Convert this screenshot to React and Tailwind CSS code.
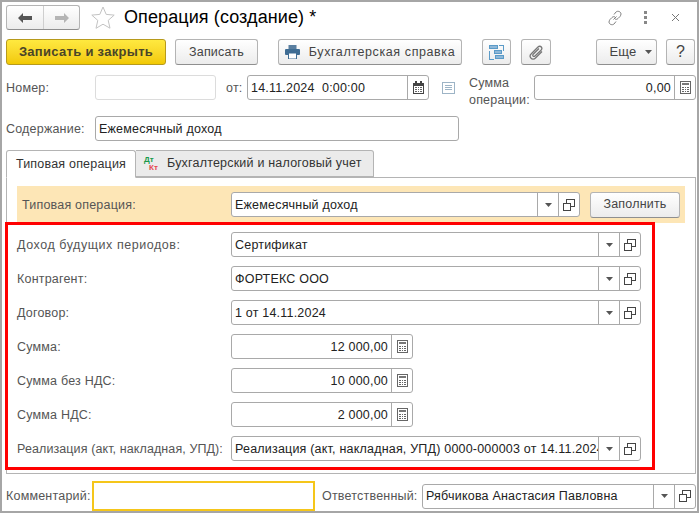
import React from "react";

const Drop = () => (
  <svg width="7" height="4" viewBox="0 0 7 4"><path d="M0 0h7L3.5 4z" fill="#555" /></svg>
);
const Open = () => (
  <svg width="12" height="12" viewBox="0 0 12 12" fill="none" stroke="#444" strokeWidth="1" shapeRendering="crispEdges">
    <path d="M3.500 4V.5h8v7H8" />
    <path d="M.5 4.500h7v7h-7z" fill="#fff" />
    <path d="M4.500 4.500h3v3" />
  </svg>
);
const Calc = () => (
  <svg width="11" height="13" viewBox="0 0 11 13" shapeRendering="crispEdges">
    <rect x="0.5" y="0.5" width="10" height="12" fill="#fff" stroke="#666" />
    <rect x="2" y="2" width="7" height="2" fill="#777" />
    {[5.5, 7.5, 9.5].map((y) => [2, 4.5, 7].map((x) => <rect key={x + "-" + y} x={x} y={y} width="1.5" height="1.5" fill="#666" />))}
  </svg>
);
const Cal = () => (
  <svg width="11" height="13" viewBox="0 0 11 13" shapeRendering="crispEdges">
    <rect x="0" y="2" width="11" height="11" fill="#444" />
    <rect x="2" y="0" width="2" height="3" fill="#444" />
    <rect x="7" y="0" width="2" height="3" fill="#444" />
    <rect x="1" y="5" width="9" height="7" fill="#fff" />
    {[6, 8, 10].map((y) => [2, 4.5, 7].map((x) => <rect key={x + "-" + y} x={x} y={y} width="1.5" height="1" fill="#666" />))}
  </svg>
);

function Side({ w, children }) {
  return <div className={`${w} h-full flex items-center justify-center border-l border-[#a9a9a9] shrink-0`}>{children}</div>;
}

function Field({ w, text, right, drop, open, calc, cal }) {
  return (
    <div className={`${w} h-[25px] flex items-center bg-white border border-[#a9a9a9] rounded-[3px] shrink-0 overflow-hidden`}>
      <div className={`flex-1 min-w-0 px-[3px] pt-px whitespace-pre overflow-hidden text-[#222] ${right ? "text-right" : ""}`}>{text}</div>
      {drop && <Side w="w-[21px]"><Drop /></Side>}
      {open && <Side w="w-[21px]"><Open /></Side>}
      {calc && <Side w="w-[21px]"><Calc /></Side>}
      {cal && <Side w="w-[21px]"><Cal /></Side>}
    </div>
  );
}

function Btn({ w, children, className = "" }) {
  return (
    <button className={`${w} h-[26px] shrink-0 flex items-center justify-center rounded-[3px] border border-[#b4b4b4] border-b-[#8f8f8f] bg-gradient-to-b from-white to-[#ececec] text-[#444] ${className}`}>
      {children}
    </button>
  );
}

function Row({ label, children, mt = "mt-[9px]", labelClass = "" }) {
  return (
    <div className={`flex items-center h-[25px] ${mt}`}>
      <div className={`w-[214px] pt-px text-[#555] shrink-0 whitespace-nowrap ${labelClass}`}>{label}</div>
      {children}
    </div>
  );
}

export default function App() {
  return (
    <div
      className="relative w-[699px] h-[513px] bg-white border-2 border-[#a6a6a6] overflow-hidden text-[12.5px] tracking-[0.2px]"
      style={{ fontFamily: '"Liberation Sans", Arial, sans-serif' }}
    >
      {/* header */}
      <div className="flex items-center h-[25px] mt-[3px] pl-[4px] pr-[17px]">
        <div className="flex w-[74px] h-[25px] rounded-[3px] border border-[#b4b4b4] border-b-[#8f8f8f] bg-gradient-to-b from-white to-[#ececec]">
          <div className="w-[37px] flex items-center justify-center border-r border-[#cfcfcf]">
            <svg width="14" height="10" viewBox="0 0 14 10"><path d="M0 5l5-5v3h9v4H5v3z" fill="#555" /></svg>
          </div>
          <div className="flex-1 flex items-center justify-center">
            <svg width="14" height="10" viewBox="0 0 14 10"><path d="M14 5L9 0v3H0v4h9v3z" fill="#b5b5b5" /></svg>
          </div>
        </div>
        <svg className="ml-[11px]" width="24" height="23" viewBox="0 0 24 23" fill="none" stroke="#c3c3c3" strokeWidth="1">
          <path d="M12 1l3.200 7.400 8 .7-6 5.300 1.800 7.800L12 18.200 5 22.300l1.800-7.900-6-5.300 8-.7z" />
        </svg>
        <div className="ml-[9px] text-[18px] text-black tracking-[0.1px] whitespace-nowrap">Операция (создание) *</div>
        <div className="ml-auto flex items-center">
          <svg width="16" height="16" viewBox="0 0 16 16" fill="none" stroke="#808080" strokeWidth="1">
            <path d="M6.500 9.500l3-3M7 4.500l2-2.500c1.500-1.500 5-.5 5 2 0 1-.5 1.500-1 2.500l-2 2c-1 1-2 1-3 .5M9 11.500l-2 2.500c-1.500 1.500-5 .5-5-2 0-1 .5-1.500 1-2.500l2-2c1-1 2-1 3-.5" />
          </svg>
          <div className="ml-[21px] flex flex-col gap-[2px]">
            <span className="block w-[3px] h-[3px] bg-[#888]" />
            <span className="block w-[3px] h-[3px] bg-[#888]" />
            <span className="block w-[3px] h-[3px] bg-[#888]" />
          </div>
          <svg className="ml-[24px]" width="9" height="9" viewBox="0 0 9 9" stroke="#777" strokeWidth="1"><path d="M1 1l7 7M8 1L1 8" /></svg>
        </div>
      </div>

      {/* toolbar */}
      <div className="flex items-center mt-[9px] pl-[4px]">
        <button className="w-[160px] h-[26px] shrink-0 rounded-[3px] border border-[#b79a1c] bg-gradient-to-b from-[#ffe93f] to-[#f2c900] font-bold text-[13px] tracking-[0.3px] text-[#4a4528]">
          Записать и закрыть
        </button>
        <Btn w="w-[83px]" className="ml-[9px]">Записать</Btn>
        <Btn w="w-[184px]" className="ml-[20px] gap-[9px]">
          <svg width="15" height="14" viewBox="0 0 15 14">
            <rect x="3.500" y="0" width="8" height="4" fill="#5a7fa0" />
            <rect x="0" y="4" width="15" height="6" rx="1" fill="#3f6d94" />
            <rect x="3.500" y="8" width="8" height="6" fill="#fff" stroke="#3f6d94" />
          </svg>
          <span className="tracking-[0.6px]">Бухгалтерская справка</span>
        </Btn>
        <Btn w="w-[29px]" className="ml-[20px]">
          <svg width="15" height="15" viewBox="0 0 15 15" fill="none" stroke="#5b9bc8" strokeWidth="1" shapeRendering="crispEdges">
            <rect x="0.500" y="0.500" width="8" height="3" fill="#8fb8d8" />
            <rect x="5.500" y="5.500" width="7" height="3" fill="#8fb8d8" />
            <rect x="6.500" y="10.500" width="8" height="3" fill="#8fb8d8" />
            <path d="M.5 6v8h4M10 .5h4.500v5" />
          </svg>
        </Btn>
        <Btn w="w-[30px]" className="ml-[10px]">
          <svg width="15" height="15" viewBox="0 0 15 15" fill="none" stroke="#777" strokeWidth="1.300">
            <path d="M13 6.500l-6.500 6.500c-1.500 1.500-4 1.500-5-.5-.7-1.200-.3-2.800.8-3.800L9 2c1-1 2.500-1 3.300 0 .8 1 .7 2.200-.3 3.200L6 11c-.6.600-1.400.600-1.900.100-.5-.5-.5-1.300.1-1.900L10 3.500" />
          </svg>
        </Btn>
        <Btn w="w-[61px]" className="ml-[45px] gap-[8px] pl-[8px]">
          <span className="text-[13px]">Еще</span>
          <Drop />
        </Btn>
        <Btn w="w-[29px]" className="ml-[9px] text-[16px] text-[#333]">?</Btn>
      </div>

      {/* number row */}
      <div className="flex items-start h-[25px] mt-[10px] pl-[4px]">
        <div className="w-[89px] h-[25px] pt-px flex items-center text-[#555] shrink-0">Номер:</div>
        <div className="w-[121px] h-[25px] rounded-[3px] border border-[#dcdcdc] shrink-0" />
        <div className="ml-[10px] w-[21px] h-[25px] pt-px flex items-center text-[#555] shrink-0">от:</div>
        <Field w="w-[182px]" text="14.11.2024  0:00:00" cal />
        <svg className="ml-[13px] mt-[7px] shrink-0" width="13" height="12" viewBox="0 0 13 12" fill="none" stroke="#9db4c6" strokeWidth="1" shapeRendering="crispEdges">
          <rect x="0.500" y="0.500" width="12" height="11" />
          <path d="M3 3.500h7M3 5.500h7M3 7.500h7" />
        </svg>
        <div className="ml-[14px] w-[65px] text-[#555] leading-[17px] shrink-0">Сумма<br />операции:</div>
        <Field w="w-[162px]" text="0,00" right calc />
      </div>

      {/* content */}
      <div className="flex items-center mt-[16px] pl-[4px]">
        <div className="w-[89px] pt-px text-[#555] shrink-0">Содержание:</div>
        <Field w="w-[364px]" text="Ежемесячный доход" />
      </div>

      {/* tabs */}
      <div className="flex items-end mt-[9px] ml-[4px] h-[27px] relative z-10">
        <div className="w-[130px] h-[28px] -mb-px flex items-center justify-center bg-white border border-[#b4b4b4] border-b-white rounded-t-[3px] text-[#333]">
          Типовая операция
        </div>
        <div className="w-[238px] h-[27px] flex items-center pl-[8px] bg-[#ebebeb] border border-l-0 border-[#b4b4b4] rounded-tr-[3px] text-[#333]">
          <span className="relative w-[18px] h-[18px] mr-[5px] shrink-0 text-[8px] font-bold leading-none tracking-normal">
            <span className="absolute left-0 top-[1px] text-[#1a9a4a]">Дт</span>
            <span className="absolute left-[5px] top-[9px] text-[#e5484d]">Кт</span>
          </span>
          <span className="whitespace-nowrap">Бухгалтерский и налоговый учет</span>
        </div>
      </div>

      {/* panel */}
      <div className="ml-[4px] w-[690px] h-[297px] border border-[#b4b4b4] px-[10px] pt-[8px]">
        <div className="flex items-center h-[37px] w-[668px] bg-[#fde6b6] pl-[5px]">
          <div className="w-[209px] pt-px text-[#555] shrink-0">Типовая операция:</div>
          <Field w="w-[349px]" text="Ежемесячный доход" drop open />
          <Btn w="w-[90px]" className="ml-[10px]">Заполнить</Btn>
        </div>
        <div className="mt-[9px]">
          <Row label="Доход будущих периодов:" mt="mt-0" labelClass="tracking-[0.55px]"><Field w="w-[410px]" text="Сертификат" drop open /></Row>
          <Row label="Контрагент:"><Field w="w-[410px]" text="ФОРТЕКС ООО" drop open /></Row>
          <Row label="Договор:"><Field w="w-[410px]" text="1 от 14.11.2024" drop open /></Row>
          <Row label="Сумма:"><Field w="w-[182px]" text="12 000,00" right calc /></Row>
          <Row label="Сумма без НДС:"><Field w="w-[182px]" text="10 000,00" right calc /></Row>
          <Row label="Сумма НДС:"><Field w="w-[182px]" text="2 000,00" right calc /></Row>
          <Row label="Реализация (акт, накладная, УПД):" labelClass="tracking-[0.1px]"><Field w="w-[410px]" text="Реализация (акт, накладная, УПД) 0000-000003 от 14.11.2024" drop open /></Row>
        </div>
      </div>

      {/* footer */}
      <div className="flex items-center mt-[7px] pl-[4px]">
        <div className="w-[86px] pt-px text-[#555] shrink-0 whitespace-nowrap">Комментарий:</div>
        <div className="w-[223px] h-[30px] border-2 border-[#f5c61a] shrink-0" />
        <div className="ml-[7px] w-[100px] pt-px text-[#555] shrink-0 whitespace-nowrap">Ответственный:</div>
        <Field w="w-[274px]" text="Рябчикова Анастасия Павловна" drop open />
      </div>

      {/* red annotation */}
      <div className="absolute left-[3px] top-[220px] w-[650px] h-[248px] border-[3px] border-[#ff0000] pointer-events-none" />
    </div>
  );
}
